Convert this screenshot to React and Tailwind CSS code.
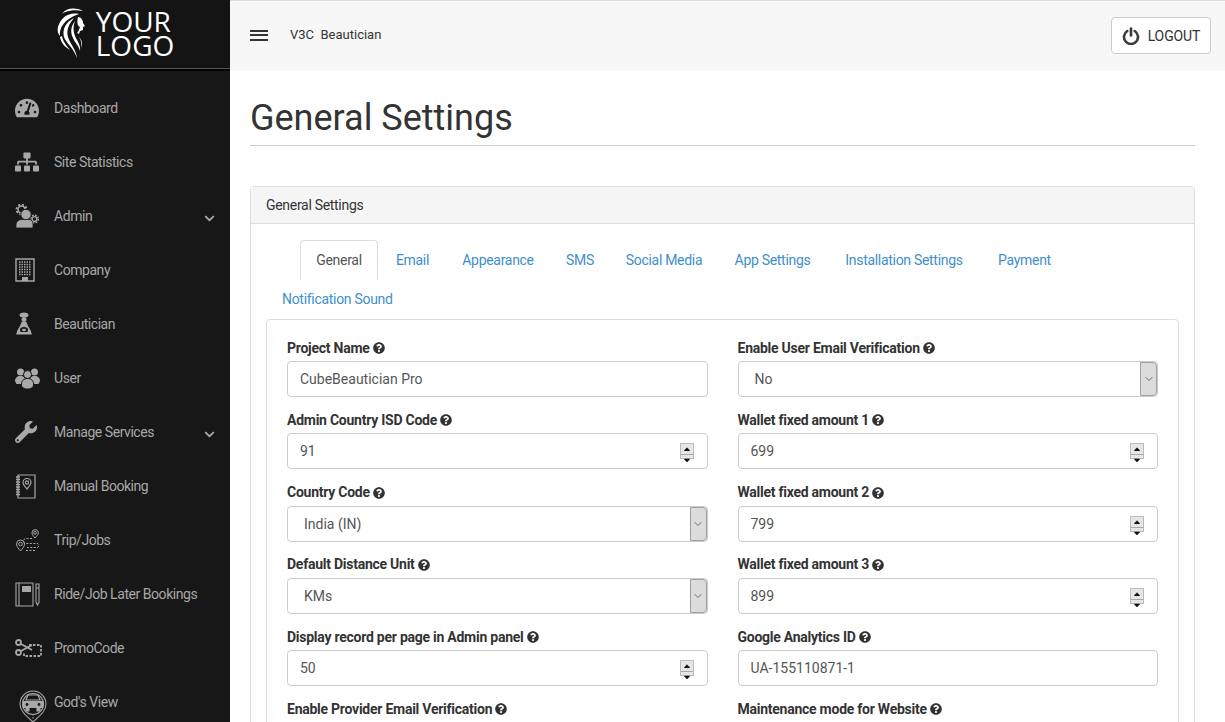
import React from 'react';
import { FaTachometerAlt, FaSitemap, FaWrench, FaQuestionCircle, FaChevronDown, FaCaretUp, FaCaretDown } from 'react-icons/fa';
import { ChevronDown } from 'lucide-react';

const fontStack = { fontFamily: '"Roboto", "Noto Sans", sans-serif' };

// Line icons that the packages don't have
const CompanyIcon = () => (
    <svg width="20" height="24" viewBox="0 0 20 24" fill="none" stroke="currentColor">
        <path d="M1 1h18v22H1z" strokeWidth="1.4" />
        <path d="M4 4h12M4 6.500h12M4 9h12M4 11.500h12M4 14h12M4 16.500h12" strokeWidth="1.500" strokeDasharray="1.500 1" />
        <path d="M7 23v-4h6v4z" fill="currentColor" stroke="none" />
    </svg>
);

const BeauticianIcon = () => (
    <svg width="18" height="24" viewBox="0 0 18 24" fill="currentColor">
        <ellipse cx="9" cy="3" rx="4.500" ry="2.500" />
        <circle cx="9" cy="7.500" r="2.500" />
        <path d="M6.500 10h5l1.500 4 3 5v1H2v-1l3-5z" />
        <ellipse cx="9" cy="18" rx="4" ry="3" fill="#171717" />
        <ellipse cx="9" cy="18" rx="2" ry="1.300" />
        <path d="M2 20h14l1 2.500H1z" />
    </svg>
);

const AdminIcon = () => (
    <svg width="24" height="24" viewBox="0 0 24 24" fill="currentColor">
        <circle cx="6.500" cy="5.500" r="3.500" fill="none" stroke="currentColor" strokeWidth="1.600" />
        <circle cx="6.500" cy="5.500" r="5" fill="none" stroke="currentColor" strokeWidth="1.800" strokeDasharray="2 1.900" />
        <circle cx="19.500" cy="15" r="2.400" fill="none" stroke="currentColor" strokeWidth="1.400" />
        <circle cx="19.500" cy="15" r="3.800" fill="none" stroke="currentColor" strokeWidth="1.500" strokeDasharray="1.700 1.300" />
        <circle cx="11" cy="10.500" r="5.200" stroke="#171717" strokeWidth="1" />
        <path d="M1 24v-3c0-3.500 3-5.500 6-5.500h8c1.500 0 3 2.500 3 4.500v4z" stroke="#171717" strokeWidth="0.800" />
    </svg>
);

const UserGroupIcon = () => (
    <svg width="25" height="21" viewBox="0 0 25 21" fill="currentColor">
        <circle cx="5.500" cy="4" r="3.500" />
        <circle cx="19.500" cy="4" r="3.500" />
        <path d="M0 13c0-3 2-5 5.500-5 3 0 5 2 5 5v3H1.500z" />
        <path d="M14.500 13c0-3 2-5 5-5 3.500 0 5.500 2 5.500 5l-1.500 3h-9z" />
        <circle cx="12.500" cy="6.500" r="4" stroke="#171717" strokeWidth="1" />
        <path d="M6.500 16c0-3.500 2.500-5.500 6-5.500s6 2 6 5.500v1c0 2.500-3 4-6 4s-6-1.500-6-4z" stroke="#171717" strokeWidth="1" />
    </svg>
);

const ManualBookingIcon = () => (
    <svg width="21" height="25" viewBox="0 0 21 25" fill="none" stroke="currentColor" strokeWidth="1.200">
        <path d="M3 1h17v23H3z" />
        <path d="M1 3h4M1 5.500h4M1 8h4M1 10.500h4M1 13h4M1 15.500h4M1 18h4M1 20.500h4" strokeWidth="1.300" />
        <path d="M12 15c-2.500-3-4-4.500-4-6.500a4 4 0 0 1 8 0c0 2-1.500 3.500-4 6.500z" />
        <circle cx="12" cy="8.500" r="1.600" />
    </svg>
);

const TripIcon = () => (
    <svg width="26" height="26" viewBox="0 0 26 26" fill="none" stroke="currentColor" strokeWidth="1">
        <path d="M5.500 24c-2-2.500-4-4.500-4-7a4 4 0 0 1 8 0c0 2.500-2 4.500-4 7z" />
        <circle cx="5.500" cy="17" r="1.800" />
        <path d="M20 11c-1.500-2-3-3.200-3-5.200a3.200 3.200 0 0 1 6.400 0c0 2-1.900 3.200-3.400 5.200z" />
        <circle cx="20" cy="5.800" r="1.400" />
        <path d="M17 11.500h-6a2.500 2.500 0 0 0 0 5h11a2 2 0 0 1 0 4H12M11 23.500h9" strokeDasharray="2 1.500" />
    </svg>
);

const LaterBookingIcon = () => (
    <svg width="25" height="25" viewBox="0 0 25 25" fill="none" stroke="currentColor" strokeWidth="1.100">
        <path d="M1 1h17v23H1zM4 1v23" />
        <path d="M7 4h9v6H7z" fill="currentColor" stroke="none" />
        <path d="M21 2h3v18l-1.500 3-1.500-3zM21 6h3" />
    </svg>
);

const PromoIcon = () => (
    <svg width="27" height="18" viewBox="0 0 27 18" fill="none" stroke="currentColor" strokeWidth="1.800">
        <circle cx="3.500" cy="3.500" r="2.500" />
        <circle cx="3.500" cy="13.500" r="2.500" />
        <path d="M6 5l11 6M6 12l11-6" />
        <path d="M14 6h12v11H9v-3" strokeDasharray="2.500 1.500" />
    </svg>
);

const GodsViewIcon = () => (
    <svg width="28" height="33" viewBox="0 0 28 33" fill="none" stroke="currentColor" strokeWidth="1.100">
        <path d="M14 32C9 27 1 22 1 14a13 13 0 0 1 26 0c0 8-8 13-13 18z" />
        <circle cx="14" cy="14" r="10.500" />
        <path d="M9 5h10l2 5H7z" strokeWidth="1.200" />
        <path d="M4 11h20v7H4z" fill="currentColor" stroke="none" />
        <path d="M7 18v3h3v-3M18 18v3h3v-3" fill="currentColor" />
        <circle cx="8" cy="14.500" r="1.400" fill="#171717" stroke="none" />
        <circle cx="20" cy="14.500" r="1.400" fill="#171717" stroke="none" />
        <path d="M14 24v6" strokeDasharray="1.500 1.500" />
    </svg>
);

// Woman's head and flowing hair next to the logo text
const LogoMark = () => (
    <svg width="28" height="50" viewBox="0 0 28 50" fill="#fff">
        <path d="M26 3C18-1 9 0 5 6c3-3 12-5 21-3z" />
        <path d="M22 6C12 4 4 9 1 19c-1 4 0 7 2 9-1-8 4-17 19-22z" />
        <path d="M17 10C9 14 5 21 7 29c2 6 9 10 13 21-1-9-7-14-9-21-2-7 1-13 6-19z" />
        <path d="M3 29c1 6 5 10 10 13-3-4-7-8-8-14z" />
        <path d="M18 13c-4 5-5 11-2 17 2 5 6 8 7 13 1-6-3-10-5-15-2-5-2-10 0-15z" />
        <path d="M21 9c3 0 5 3 5 6l2 3-2 1 0 3-3 1-1 3-2-1c2-2 2-4 3-6-3-1-3-6-2-10z" />
        <path d="M22 29c2 3 3 7 2 11 2-4 1-8-2-11z" />
    </svg>
);

const PowerIcon = () => (
    <svg width="18" height="18" viewBox="0 0 18 18" fill="none" stroke="#3a3a3a" strokeWidth="2.600" strokeLinecap="round">
        <path d="M5.300 4a7 7 0 1 0 7.400 0" />
        <path d="M9 1.500v7" />
    </svg>
);

const menuItems = [
    { label: 'Dashboard', icon: <FaTachometerAlt className="text-[24px]" /> },
    { label: 'Site Statistics', icon: <FaSitemap className="text-[24px]" /> },
    { label: 'Admin', icon: <AdminIcon />, arrow: true },
    { label: 'Company', icon: <CompanyIcon /> },
    { label: 'Beautician', icon: <BeauticianIcon /> },
    { label: 'User', icon: <UserGroupIcon /> },
    { label: 'Manage Services', icon: <FaWrench className="text-[22px]" />, arrow: true },
    { label: 'Manual Booking', icon: <ManualBookingIcon /> },
    { label: 'Trip/Jobs', icon: <TripIcon /> },
    { label: 'Ride/Job Later Bookings', icon: <LaterBookingIcon /> },
    { label: 'PromoCode', icon: <PromoIcon /> },
    { label: "God's View", icon: <GodsViewIcon />, shifted: true },
];

const tabRow = [
    { label: 'General', width: 'w-[78px]', active: true },
    { label: 'Email', width: 'w-[65px]' },
    { label: 'Appearance', width: 'w-[102px]' },
    { label: 'SMS', width: 'w-[58px]' },
    { label: 'Social Media', width: 'w-[106px]' },
    { label: 'App Settings', width: 'w-[107px]' },
    { label: 'Installation Settings', width: 'w-[152px]' },
    { label: 'Payment', width: 'w-[85px]' },
];

const leftFields = [
    { label: 'Project Name', type: 'text', value: 'CubeBeautician Pro' },
    { label: 'Admin Country ISD Code', type: 'number', value: '91' },
    { label: 'Country Code', type: 'select', value: 'India (IN)' },
    { label: 'Default Distance Unit', type: 'select', value: 'KMs' },
    { label: 'Display record per page in Admin panel', type: 'number', value: '50' },
    { label: 'Enable Provider Email Verification', type: 'select', value: 'No' },
];

const rightFields = [
    { label: 'Enable User Email Verification', type: 'select', value: 'No' },
    { label: 'Wallet fixed amount 1', type: 'number', value: '699' },
    { label: 'Wallet fixed amount 2', type: 'number', value: '799' },
    { label: 'Wallet fixed amount 3', type: 'number', value: '899' },
    { label: 'Google Analytics ID', type: 'text', value: 'UA-155110871-1' },
    { label: 'Maintenance mode for Website', type: 'select', value: 'No' },
];

const Spinner = () => (
    <div className="w-[14px] h-[16px] flex flex-col border border-[#bbb] bg-[#e6e6e6] shrink-0">
        <div className="flex-1 border-b border-b-[#aaa] flex items-center justify-center text-[#111]"><FaCaretUp className="text-[10px]" /></div>
        <div className="flex-1 flex items-center justify-center text-[#111]"><FaCaretDown className="text-[10px]" /></div>
    </div>
);

const Field = ({ field }) => (
    <div className="h-[72.25px]">
        <label className="flex items-center gap-[3px] h-[20px] mb-[3px] text-[14px] font-bold text-[#333] tracking-[-0.25px]">
            {field.label}
            <FaQuestionCircle className="text-[12px] text-[#333]" />
        </label>
        <div className="flex items-center h-[36px] border border-[#ccc] rounded-[4px] bg-white text-[14px] text-[#555]">
            {field.type === 'select' ? (
                <>
                    <span className="flex-1 pl-[16px] pt-[1px]">{field.value}</span>
                    <div className="w-[17px] h-full flex items-center justify-center bg-[#dcdcdc] border border-[#a0a0a0] rounded-r-[4px] text-[#444]">
                        <ChevronDown size={12} strokeWidth={1.5} />
                    </div>
                </>
            ) : (
                <>
                    <input className="flex-1 min-w-0 pl-[12px] pt-[1px] outline-none bg-transparent" type="text" readOnly value={field.value} />
                    {field.type === 'number' && <div className="mr-[13px]"><Spinner /></div>}
                </>
            )}
        </div>
    </div>
);

const Sidebar = () => (
    <aside className="w-[230px] shrink-0 h-full bg-[#171717] overflow-hidden">
        <div className="h-[71px] bg-[#141414] border-b-[3px] border-b-black flex items-center justify-center relative">
            <div className="flex items-center gap-[11px] ml-[1px] mt-[-3px]">
                <LogoMark />
                <div className="text-white text-[28px] mt-[1px]" style={{ fontFamily: '"Open Sans", sans-serif' }}>
                    <div className="h-[24px] leading-[24px]">YOUR</div>
                    <div className="h-[24px] leading-[24px]">LOGO</div>
                </div>
            </div>
            <div className="absolute left-0 right-0 bottom-[-1px] h-px bg-[#555]" />
        </div>
        <nav className="pt-[10px]">
            {menuItems.map((item) => (
                <div key={item.label} className="h-[54px] flex items-center text-[#a8a8a8] text-[14px] tracking-[-0.45px]">
                    <div className={item.shifted ? 'w-[54px] pl-[19px] flex justify-start mt-[9px]' : 'w-[54px] pl-[15px] flex justify-start'}>
                        {item.icon}
                    </div>
                    <span className="flex-1">{item.label}</span>
                    {item.arrow && <FaChevronDown className="text-[11px] mr-[15px] mt-[4px]" />}
                </div>
            ))}
        </nav>
    </aside>
);

const App = () => {
    return (
        <div className="flex h-screen w-full overflow-hidden bg-white" style={fontStack}>
            <Sidebar />
            <main className="flex-1 min-w-0 h-full overflow-hidden">
                <header className="h-[71px] bg-[#f7f7f7] border-t border-t-[#ddd] flex items-center pl-[20px] pr-[14px]">
                    <div className="flex flex-col gap-[2.500px] w-[18px] mr-[22px] mt-[-2px]">
                        <span className="h-[2px] bg-[#333]" />
                        <span className="h-[2px] bg-[#333]" />
                        <span className="h-[2px] bg-[#333]" />
                    </div>
                    <span className="text-[13px] text-[#333] flex-1 mt-[-2px]">V3C&nbsp; Beautician</span>
                    <button className="w-[100px] h-[37px] mt-[-1px] bg-white border border-[#ccc] rounded-[4px] flex items-center justify-center gap-[8px] text-[14px] text-[#333] tracking-[-0.1px]">
                        <PowerIcon />
                        <span className="pt-[2px]">LOGOUT</span>
                    </button>
                </header>

                <div className="pl-[20px] pr-[30px]">
                    <h1 className="text-[36px] leading-[40px] text-[#333] pt-[27px] pb-[7px] border-b border-b-[#ccc]">General Settings</h1>

                    <section className="mt-[40px] border border-[#ddd] rounded-t-[4px]">
                        <div className="h-[37px] bg-[#f5f5f5] border-b border-b-[#ddd] flex items-center pl-[15px] text-[14px] text-[#333] tracking-[-0.3px]">
                            General Settings
                        </div>
                        <div className="px-[15px] pt-[16px] tracking-[-0.3px]">
                            <div className="flex pl-[34px] h-[40px] gap-0">
                                {tabRow.map((tab) => (
                                    <a
                                        key={tab.label}
                                        className={tab.active
                                            ? `${tab.width} shrink-0 h-[40px] flex items-center justify-center text-[14px] text-[#555] border border-[#ddd] border-b-0 rounded-t-[4px] mr-[2px]`
                                            : `${tab.width} shrink-0 h-[40px] flex items-center justify-center text-[14px] text-[#3f8fcb] mr-[2px]`}
                                    >
                                        {tab.label}
                                    </a>
                                ))}
                            </div>
                            <div className="h-[39px] flex items-center pl-[16px] text-[14px] text-[#3f8fcb]">Notification Sound</div>
                            <div className="border border-[#ddd] rounded-[4px] px-[20px] pt-[18px] grid grid-cols-2 gap-x-[30px] tracking-normal">
                                <div>
                                    {leftFields.map((field) => <Field key={field.label} field={field} />)}
                                </div>
                                <div>
                                    {rightFields.map((field) => <Field key={field.label} field={field} />)}
                                </div>
                            </div>
                        </div>
                    </section>
                </div>
            </main>
        </div>
    );
};

export default App;
